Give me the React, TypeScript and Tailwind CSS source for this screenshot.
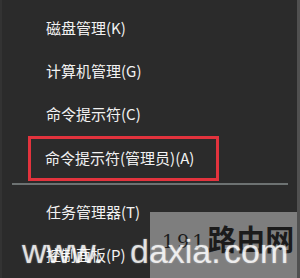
import React from 'react';

const items = [
  { label: '磁盘管理(K)' },
  { label: '计算机管理(G)' },
  { label: '命令提示符(C)' },
];

const MenuItem = ({ label }: { label: string }) => (
  <div className="h-[43px] flex items-center pl-[44px] text-[15px] text-[#f2f2f2]">{label}</div>
);

export default function App() {
  return (
    <div
      className="relative w-[300px] h-[278px] overflow-hidden bg-[#2b2b2b] border-l-2 border-l-[#333333] border-r-[3px] border-r-[#505050]"
      style={{ fontFamily: '"Noto Sans CJK SC", "Noto Sans", sans-serif' }}
    >
      <div className="flex flex-col pt-[7px]">
        {items.map((it) => (
          <MenuItem key={it.label} label={it.label} />
        ))}
        {/* highlighted entry */}
        <div className="ml-[26px] w-[191px] h-[45px] flex items-center pl-[14px] border-[3px] border-[#e2333d] text-[15px] text-[#f2f2f2]">
          命令提示符(管理员)(A)
        </div>
        <div className="mt-[2px] ml-[10px] w-[276px] h-[2px] bg-[#6d7272]" />
        <div className="mt-[6px]">
          <MenuItem label="任务管理器(T)" />
          <MenuItem label="控制面板(P)" />
        </div>
      </div>

      {/* watermark */}
      <div className="absolute left-[148px] top-[212px] w-[147px] h-[70px] bg-[#7e7e7e]">
        <div className="flex items-end pl-[12px] pt-[12px] text-[#1b1b1b]">
          <span className="text-[19px] leading-none tracking-[3px] mb-[2px]" style={{ fontFamily: '"DejaVu Serif", serif' }}>191</span>
          <span className="text-[29px] leading-none font-bold">路由网</span>
        </div>
      </div>
      <div
        className="absolute left-[20px] top-[234px] flex items-baseline text-[34px] leading-none text-white/80"
        style={{ fontFamily: '"Liberation Sans", Arial, sans-serif', textShadow: '0 0 2px rgba(255,255,255,0.4)' }}
      >
        <span className="w-[108px]">www.</span>
        <span className="w-[94px]">daxia.</span>
        <span>com</span>
      </div>
    </div>
  );
}
